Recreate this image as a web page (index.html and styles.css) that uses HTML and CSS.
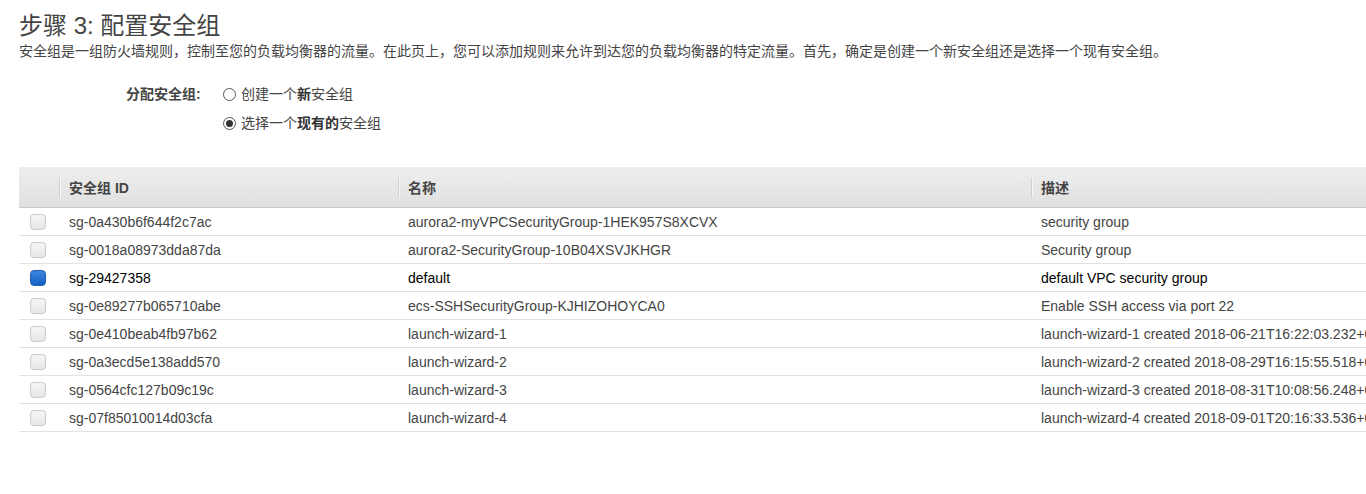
FILE: index.html
```html
<!DOCTYPE html>
<html lang="zh">
<head>
<meta charset="utf-8">
<title>步骤 3: 配置安全组</title>
<link rel="stylesheet" href="styles.css">
</head>
<body>
<div class="page">
  <h1 class="title">步骤 3: 配置安全组</h1>
  <p class="desc">安全组是一组防火墙规则，控制至您的负载均衡器的流量。在此页上，您可以添加规则来允许到达您的负载均衡器的特定流量。首先，确定是创建一个新安全组还是选择一个现有安全组。</p>
  <div class="assign">
    <div class="assign-label">分配安全组:</div>
    <div class="options">
      <label class="opt"><span class="radio"></span><span>创建一个<b>新</b>安全组</span></label>
      <label class="opt"><span class="radio on"></span><span>选择一个<b>现有的</b>安全组</span></label>
    </div>
  </div>
  <div class="table">
    <div class="row head">
      <div class="c c0"></div>
      <div class="c c1"><span class="sep"></span>安全组 ID</div>
      <div class="c c2"><span class="sep"></span>名称</div>
      <div class="c c3"><span class="sep"></span>描述</div>
    </div>
    <div class="row"><div class="c c0"><span class="cb"></span></div><div class="c c1">sg-0a430b6f644f2c7ac</div><div class="c c2">aurora2-myVPCSecurityGroup-1HEK957S8XCVX</div><div class="c c3">security group</div></div>
    <div class="row"><div class="c c0"><span class="cb"></span></div><div class="c c1">sg-0018a08973dda87da</div><div class="c c2">aurora2-SecurityGroup-10B04XSVJKHGR</div><div class="c c3">Security group</div></div>
    <div class="row sel"><div class="c c0"><span class="cb on"></span></div><div class="c c1">sg-29427358</div><div class="c c2">default</div><div class="c c3">default VPC security group</div></div>
    <div class="row"><div class="c c0"><span class="cb"></span></div><div class="c c1">sg-0e89277b065710abe</div><div class="c c2">ecs-SSHSecurityGroup-KJHIZOHOYCA0</div><div class="c c3">Enable SSH access via port 22</div></div>
    <div class="row"><div class="c c0"><span class="cb"></span></div><div class="c c1">sg-0e410beab4fb97b62</div><div class="c c2">launch-wizard-1</div><div class="c c3">launch-wizard-1 created 2018-06-21T16:22:03.232+08:00</div></div>
    <div class="row"><div class="c c0"><span class="cb"></span></div><div class="c c1">sg-0a3ecd5e138add570</div><div class="c c2">launch-wizard-2</div><div class="c c3">launch-wizard-2 created 2018-08-29T16:15:55.518+08:00</div></div>
    <div class="row"><div class="c c0"><span class="cb"></span></div><div class="c c1">sg-0564cfc127b09c19c</div><div class="c c2">launch-wizard-3</div><div class="c c3">launch-wizard-3 created 2018-08-31T10:08:56.248+08:00</div></div>
    <div class="row"><div class="c c0"><span class="cb"></span></div><div class="c c1">sg-07f85010014d03cfa</div><div class="c c2">launch-wizard-4</div><div class="c c3">launch-wizard-4 created 2018-09-01T20:16:33.536+08:00</div></div>
  </div>
</div>
</body>
</html>
```

FILE: styles.css
```css
html, body {
  margin: 0;
  padding: 0;
  background: #fff;
  overflow: hidden;
}
body {
  font-family: "Liberation Sans", "Noto Sans CJK SC", sans-serif;
  color: #444;
}
.page {
  padding: 10px 0 0 19px;
  width: 1600px;
}
.title {
  margin: 0;
  font-size: 24px;
  font-weight: normal;
  line-height: 32px;
  color: #444;
}
.desc {
  margin: 0;
  font-size: 14px;
  line-height: 18px;
  color: #444;
}
.assign {
  display: flex;
  margin-top: 24px;
  padding-left: 107px;
}
.assign-label {
  width: 97px;
  font-size: 14px;
  font-weight: bold;
  line-height: 20px;
  color: #444;
}
.options {
  display: flex;
  flex-direction: column;
  gap: 9px;
}
.opt {
  display: flex;
  align-items: center;
  gap: 5px;
  font-size: 14px;
  line-height: 20px;
  color: #444;
}
.opt b { color: #333; }
.radio {
  width: 11px;
  height: 11px;
  border: 1px solid #555;
  border-radius: 50%;
  background: #fff;
  position: relative;
  box-sizing: content-box;
}
.radio.on::after {
  content: "";
  position: absolute;
  left: 2px;
  top: 2px;
  width: 7px;
  height: 7px;
  border-radius: 50%;
  background: #333;
}
.table {
  margin-top: 34px;
  width: 1500px;
  font-size: 14px;
}
.row {
  display: flex;
  height: 28px;
  border-bottom: 1px solid #e2e2e2;
  box-sizing: border-box;
  align-items: center;
}
.row.head {
  height: 41px;
  background: linear-gradient(#eeeeee, #e0e0e0);
  border-bottom: 1px solid #c8c8c8;
  font-weight: bold;
  font-size: 14px;
  color: #444;
}
.row.sel { color: #000; }
.c {
  position: relative;
  height: 100%;
  display: flex;
  align-items: center;
  padding-left: 10px;
  box-sizing: border-box;
  white-space: nowrap;
}
.c0 { width: 40px; padding-left: 11px; }
.c1 { width: 339px; }
.c2 { width: 633px; }
.c3 { width: 488px; }
.sep {
  position: absolute;
  left: 0;
  top: 11px;
  height: 19px;
  border-left: 1px solid #cfcfcf;
  border-right: 1px solid #f5f5f5;
}
.cb {
  width: 16px;
  height: 16px;
  box-sizing: border-box;
  border: 1px solid #cacaca;
  border-radius: 4px;
  background: linear-gradient(#f6f6f6, #e6e6e6);
}
.cb.on {
  border-color: #1d5cb0;
  background: linear-gradient(#3d87e0, #1560c4);
}
```
